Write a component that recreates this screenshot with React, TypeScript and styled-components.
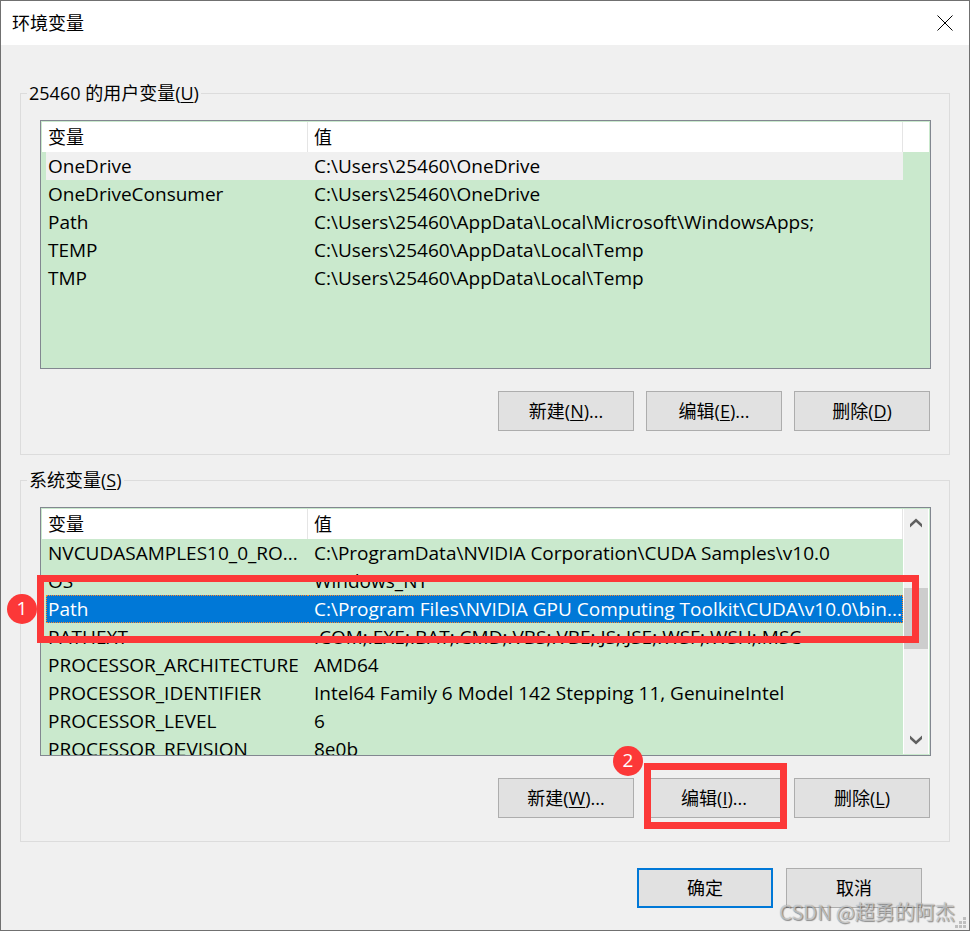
import React from "react";
import styled, { createGlobalStyle, css } from "styled-components";

const color = {
  face: "#f0f0f0",
  list: "#cae9cd",
  accent: "#0078d7",
  mark: "#fc3838",
};

const GlobalStyle = createGlobalStyle`
  *, *::before, *::after { box-sizing: border-box; }
  body {
    margin: 0;
    background: ${color.face};
    color: #000;
    font: 18px/26px "Open Sans", "Noto Sans CJK SC", sans-serif;
  }
  button { font: inherit; color: inherit; }
`;

const Dialog = styled.main`
  position: relative;
  display: flex;
  flex-direction: column;
  min-height: 100vh;
  border: 1px solid #707070;
  background: ${color.face};
`;

const TitleBar = styled.header`
  display: flex;
  align-items: center;
  justify-content: space-between;
  height: 44px;
  padding: 0 16px 0 11px;
  background: #fff;
`;

const Title = styled.h1`
  margin: 0;
  font-size: 18px;
  font-weight: 400;
`;

const CloseButton = styled.button`
  display: flex;
  padding: 0;
  border: 0;
  background: none;
`;

const Body = styled.div`
  display: flex;
  flex-direction: column;
  gap: 12px;
  padding: 35px 19px 0;
`;

const Group = styled.fieldset`
  min-width: 0;
  margin: 0;
  padding: 0;
  border: 1px solid #dcdcdc;
`;

const Legend = styled.legend`
  margin-left: 6px;
  padding: 0 2px;
`;

const GroupContent = styled.div`
  padding: 14px 18px 23px 19px;
`;

const ListFrame = styled.div`
  position: relative;
`;

const List = styled.div`
  display: flex;
  height: 249px;
  padding: 1px;
  border: 1px solid #828790;
  background: ${color.list};
  overflow: hidden;
`;

const TableArea = styled.div`
  flex: 1;
  min-width: 0;
`;

const Table = styled.table`
  width: 100%;
  table-layout: fixed;
  border-collapse: collapse;
`;

const NameColumn = styled.col`
  width: 266px;
`;

const SpareColumn = styled.col`
  width: 26px;
`;

const HeadCell = styled.th`
  height: 30px;
  padding: 0 6px;
  background: #fff;
  font-weight: 400;
  text-align: left;
  box-shadow: inset -1px 0 #e5e5e5;

  &:empty { box-shadow: none; }
`;

const Cell = styled.td<{ $first?: boolean }>`
  padding: 0 0 0 ${(p) => (p.$first ? 4 : 0)}px;
`;

type RowState = "plain" | "inactive" | "selected";

const CellText = styled.div<{ $state: RowState; $first?: boolean }>`
  height: 28px;
  padding-left: ${(p) => (p.$first ? 2 : 6)}px;
  font-size: 19px;
  line-height: 28px;
  white-space: nowrap;
  overflow: hidden;
  ${(p) => p.$state === "inactive" && css`background: ${color.face};`}
  ${(p) =>
    p.$state === "selected" &&
    css`
      padding-left: ${p.$first ? 1 : 6}px;
      border: 1px dotted #ff8728;
      border-${p.$first ? "right" : "left"}: 0;
      background: ${color.accent};
      color: #fff;
      line-height: 26px;
    `}
`;

const ScrollBar = styled.div`
  display: flex;
  flex: none;
  flex-direction: column;
  width: 26px;
  border: 1px solid #fff;
  border-width: 0 1px;
  background: ${color.face};
`;

const ArrowButton = styled.button`
  display: flex;
  align-items: center;
  justify-content: center;
  height: 28px;
  padding: 0;
  border: 0;
  background: none;
`;

const Track = styled.div`
  flex: 1;
  padding-top: 51px;
`;

const Thumb = styled.div`
  height: 61px;
  background: #cdcdcd;
`;

const Buttons = styled.div`
  display: flex;
  justify-content: flex-end;
  gap: 12px;
  padding: 22px 1px 0 0;
`;

const Footer = styled.footer`
  display: flex;
  justify-content: flex-end;
  gap: 13px;
  padding: 26px 47px 22px;
`;

const ButtonFrame = styled.div`
  position: relative;
`;

const PushButton = styled.button<{ $default?: boolean }>`
  width: 136px;
  height: 40px;
  padding: 0;
  border: ${(p) => (p.$default ? `2px solid ${color.accent}` : "1px solid #adadad")};
  background: #e1e1e1;
`;

const Key = styled.span`
  text-decoration: underline;
  text-decoration-thickness: 1px;
  text-underline-offset: 2px;
`;

const RowMark = styled.div`
  position: absolute;
  top: 68px;
  right: 12px;
  left: -3px;
  height: 68px;
  border: 7px solid ${color.mark};
  pointer-events: none;
`;

const ButtonMark = styled.div`
  position: absolute;
  inset: -15px -5px -11px -2px;
  border: 7px solid ${color.mark};
  pointer-events: none;
`;

const Step = styled.span<{ $top: number }>`
  position: absolute;
  top: ${(p) => p.$top}px;
  left: -33px;
  width: 30px;
  height: 30px;
  border-radius: 50%;
  background: ${color.mark};
  color: #fff;
  font-size: 19px;
  line-height: 28px;
  text-align: center;
`;

const Watermark = styled.span`
  position: absolute;
  right: 14px;
  bottom: 5px;
  color: rgba(240, 240, 240, 0.6);
  font-family: "Noto Sans CJK SC", sans-serif;
  font-size: 20px;
  text-shadow: 1px 1px 1px rgba(0, 0, 0, 0.4), 0 0 1px rgba(0, 0, 0, 0.4);
  pointer-events: none;
`;

const Grip = styled.svg`
  position: absolute;
  right: 3px;
  bottom: 2px;
`;

type Variable = { name: string; value: string; state?: RowState };

const userVariables: Variable[] = [
  { name: "OneDrive", value: "C:\\Users\\25460\\OneDrive", state: "inactive" },
  { name: "OneDriveConsumer", value: "C:\\Users\\25460\\OneDrive" },
  { name: "Path", value: "C:\\Users\\25460\\AppData\\Local\\Microsoft\\WindowsApps;" },
  { name: "TEMP", value: "C:\\Users\\25460\\AppData\\Local\\Temp" },
  { name: "TMP", value: "C:\\Users\\25460\\AppData\\Local\\Temp" },
];

const systemVariables: Variable[] = [
  { name: "NVCUDASAMPLES10_0_RO...", value: "C:\\ProgramData\\NVIDIA Corporation\\CUDA Samples\\v10.0" },
  { name: "OS", value: "Windows_NT" },
  {
    name: "Path",
    value: "C:\\Program Files\\NVIDIA GPU Computing Toolkit\\CUDA\\v10.0\\bin...",
    state: "selected",
  },
  { name: "PATHEXT", value: ".COM;.EXE;.BAT;.CMD;.VBS;.VBE;.JS;.JSE;.WSF;.WSH;.MSC" },
  { name: "PROCESSOR_ARCHITECTURE", value: "AMD64" },
  { name: "PROCESSOR_IDENTIFIER", value: "Intel64 Family 6 Model 142 Stepping 11, GenuineIntel" },
  { name: "PROCESSOR_LEVEL", value: "6" },
  { name: "PROCESSOR_REVISION", value: "8e0b" },
];

function VariableTable({ rows, spare }: { rows: Variable[]; spare?: boolean }) {
  return (
    <TableArea>
      <Table>
        <colgroup>
          <NameColumn />
          <col />
          {spare && <SpareColumn />}
        </colgroup>
        <thead>
          <tr>
            <HeadCell scope="col">变量</HeadCell>
            <HeadCell scope="col">值</HeadCell>
            {spare && <HeadCell as="td" />}
          </tr>
        </thead>
        <tbody>
          {rows.map(({ name, value, state = "plain" }) => (
            <tr key={name}>
              <Cell $first>
                <CellText $first $state={state}>{name}</CellText>
              </Cell>
              <Cell>
                <CellText $state={state}>{value}</CellText>
              </Cell>
            </tr>
          ))}
        </tbody>
      </Table>
    </TableArea>
  );
}

function Chevron({ down }: { down?: boolean }) {
  return (
    <svg width="12" height="10" viewBox="0 0 12 10" aria-hidden="true">
      <path
        d={down ? "M0 0.5L6 6L12 0.5V4L6 9.5L0 4Z" : "M0 9.5L6 4L12 9.5V6L6 0.5L0 6Z"}
        fill="#606060"
      />
    </svg>
  );
}

export default function App() {
  return (
    <>
      <GlobalStyle />
      <Dialog>
        <TitleBar>
          <Title>环境变量</Title>
          <CloseButton type="button" aria-label="关闭">
            <svg width="16" height="16" viewBox="0 0 16 16" aria-hidden="true">
              <path d="M0.5 0.5L15.5 15.5M15.5 0.5L0.5 15.5" stroke="#000" strokeWidth="1" />
            </svg>
          </CloseButton>
        </TitleBar>

        <Body>
          <Group>
            <Legend>25460 的用户变量(<Key>U</Key>)</Legend>
            <GroupContent>
              <List>
                <VariableTable rows={userVariables} spare />
              </List>
              <Buttons>
                <PushButton type="button">新建(<Key>N</Key>)...</PushButton>
                <PushButton type="button">编辑(<Key>E</Key>)...</PushButton>
                <PushButton type="button">删除(<Key>D</Key>)</PushButton>
              </Buttons>
            </GroupContent>
          </Group>

          <Group>
            <Legend>系统变量(<Key>S</Key>)</Legend>
            <GroupContent>
              <ListFrame>
                <List>
                  <VariableTable rows={systemVariables} />
                  <ScrollBar>
                    <ArrowButton type="button" aria-label="向上滚动"><Chevron /></ArrowButton>
                    <Track><Thumb /></Track>
                    <ArrowButton type="button" aria-label="向下滚动"><Chevron down /></ArrowButton>
                  </ScrollBar>
                </List>
                <RowMark />
                <Step $top={87}>1</Step>
              </ListFrame>
              <Buttons>
                <PushButton type="button">新建(<Key>W</Key>)...</PushButton>
                <ButtonFrame>
                  <PushButton type="button">编辑(<Key>I</Key>)...</PushButton>
                  <ButtonMark />
                  <Step $top={-32}>2</Step>
                </ButtonFrame>
                <PushButton type="button">删除(<Key>L</Key>)</PushButton>
              </Buttons>
            </GroupContent>
          </Group>
        </Body>

        <Footer>
          <PushButton type="button" $default>确定</PushButton>
          <PushButton type="button">取消</PushButton>
        </Footer>

        <Watermark>CSDN @超勇的阿杰</Watermark>
        <Grip width="11" height="11" viewBox="0 0 11 11" aria-hidden="true">
          <path
            d="M8 0h3v3h-3zM4 4h3v3h-3zM8 4h3v3h-3zM0 8h3v3h-3zM4 8h3v3h-3zM8 8h3v3h-3z"
            fill="#bfbfbf"
          />
        </Grip>
      </Dialog>
    </>
  );
}
